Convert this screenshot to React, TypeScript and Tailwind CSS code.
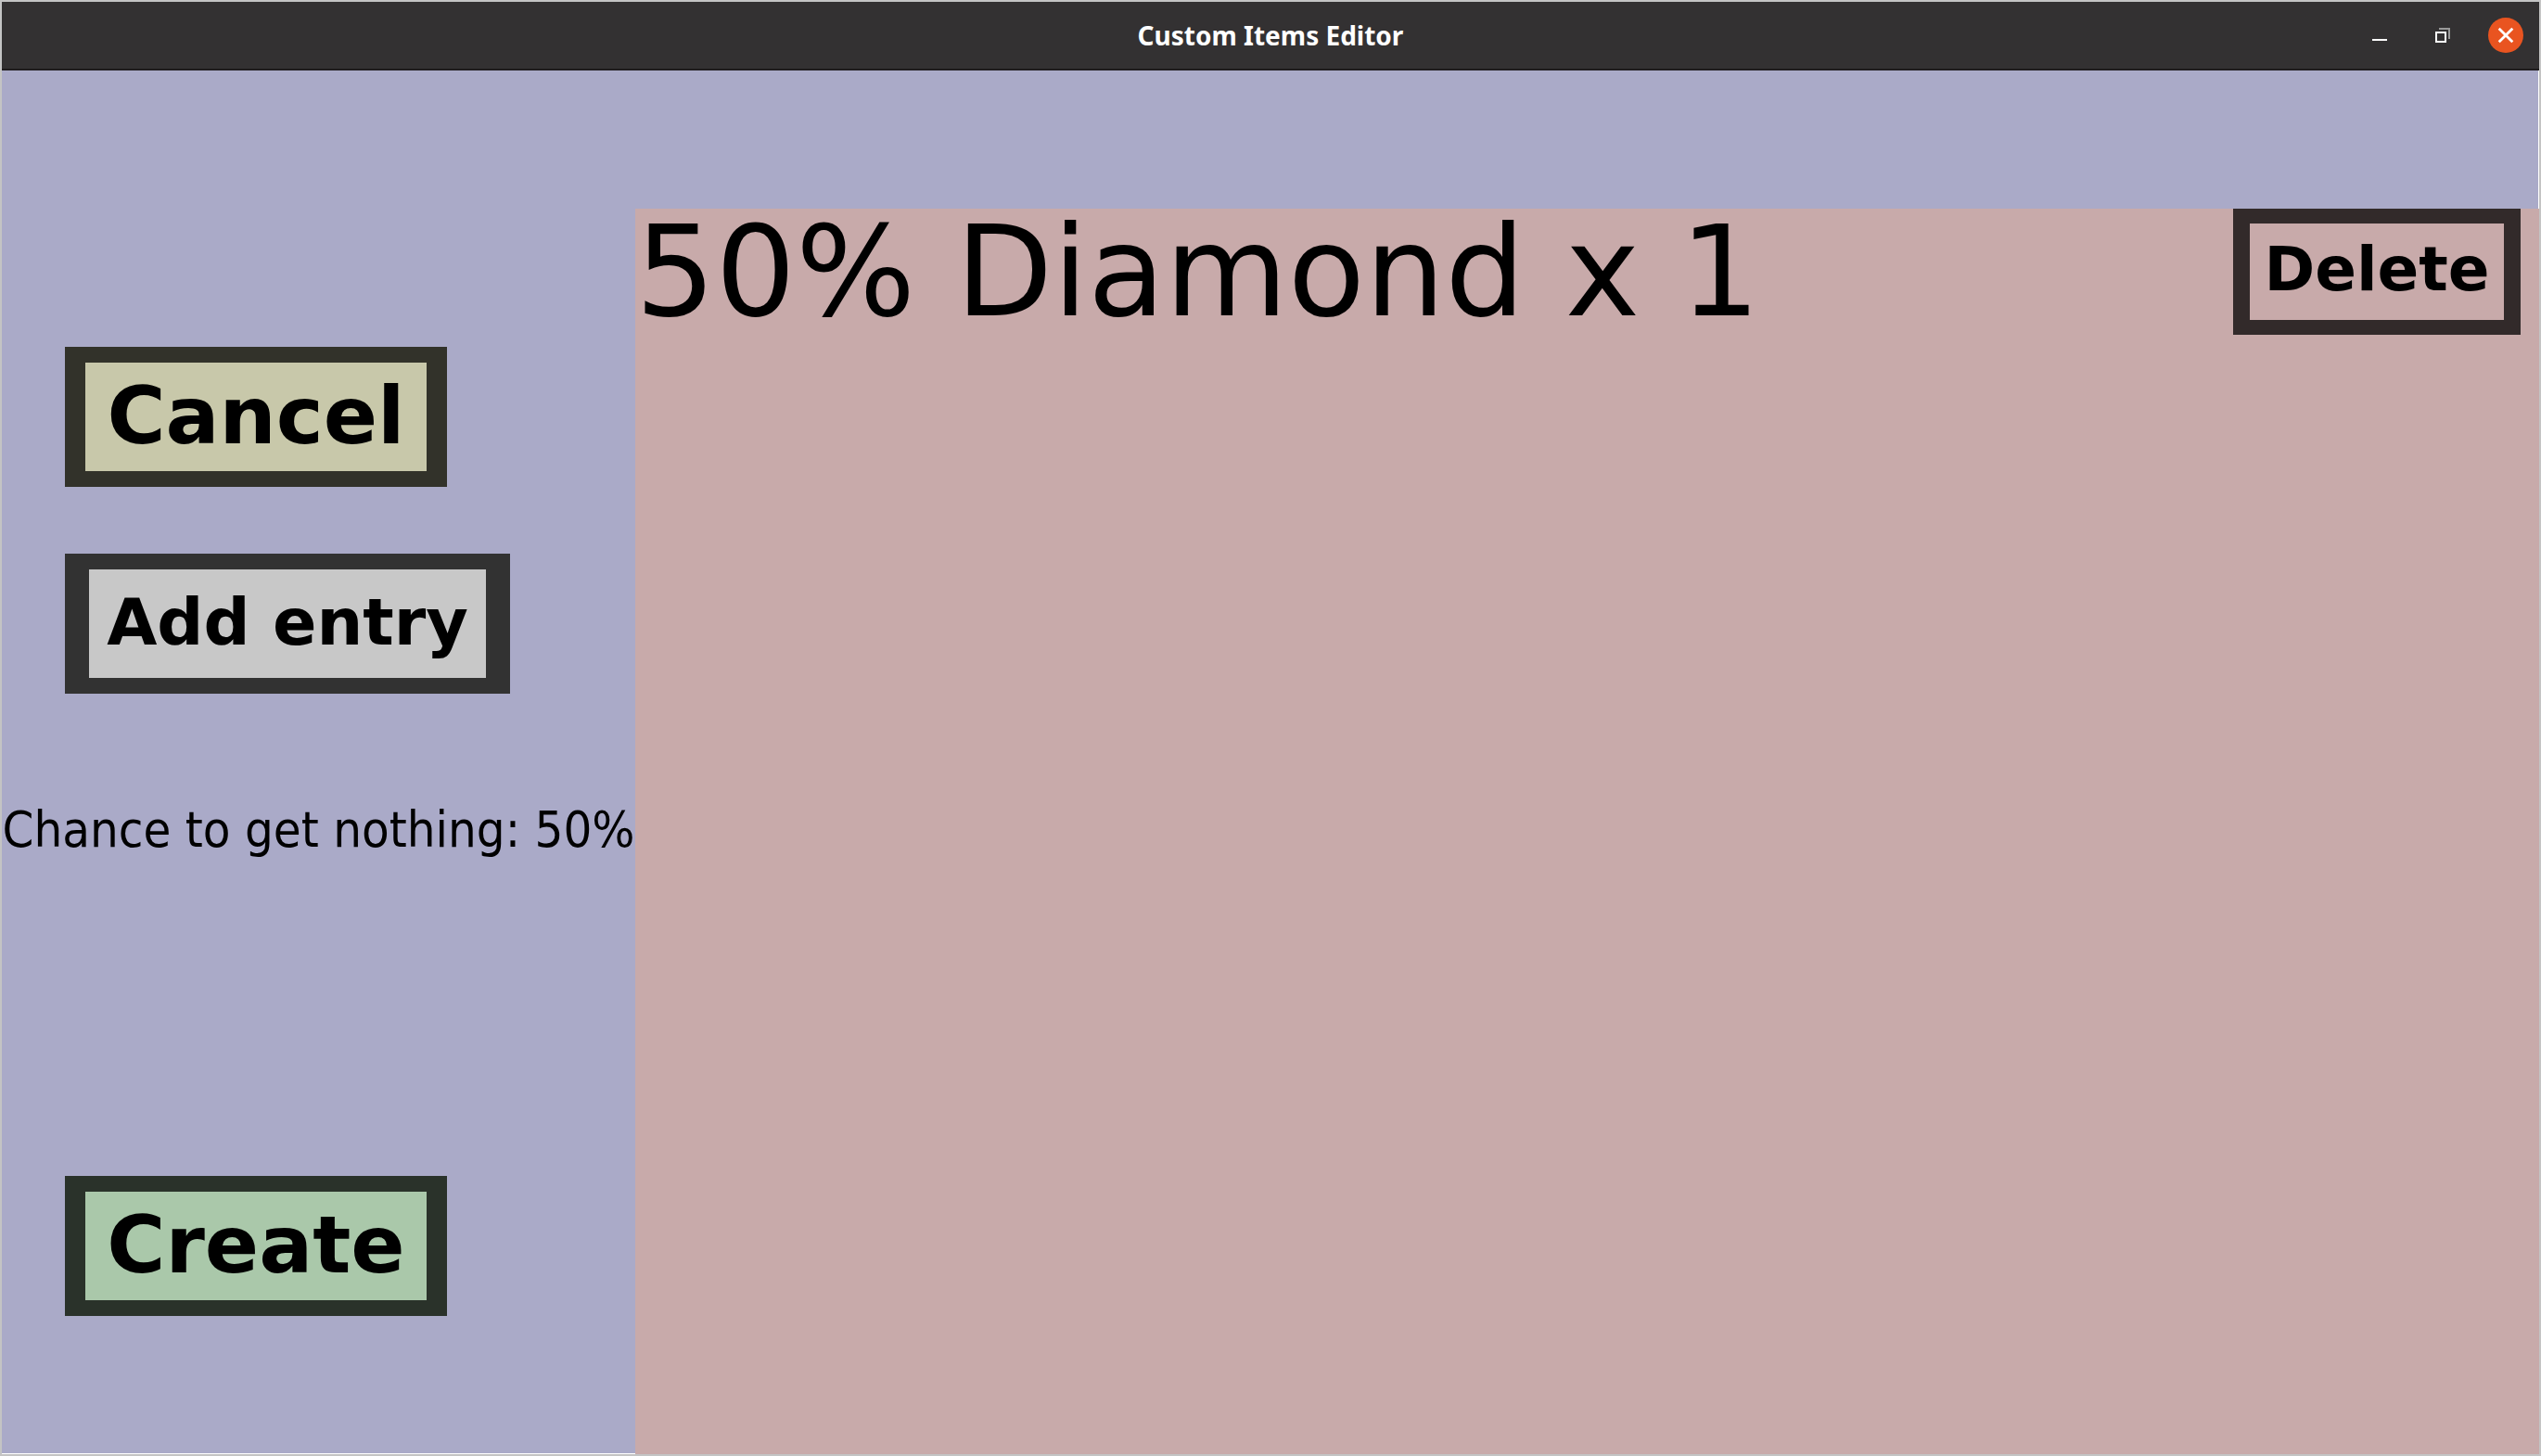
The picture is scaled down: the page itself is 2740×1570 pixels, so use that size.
import type { ReactNode } from "react";

type ActionProps = { className: string; children: ReactNode };

function ActionButton({ className, children }: ActionProps) {
  return (
    <button
      type="button"
      className={`flex items-center justify-center whitespace-nowrap pb-1 font-bold leading-none text-black ${className}`}
    >
      {children}
    </button>
  );
}

function TitleBar() {
  return (
    <header className="grid h-[74px] grid-cols-[1fr_auto_1fr] items-center border-b-2 border-[#1f1c1e] bg-[#333132]">
      <span />
      <h1 className="font-['Noto_Sans',sans-serif] text-[28px] font-bold leading-9 text-white">
        Custom Items Editor
      </h1>
      <div className="flex items-center justify-end gap-7 pr-4">
        <button type="button" aria-label="Minimize" className="size-10">
          <svg viewBox="0 0 40 40" className="size-10" shapeRendering="crispEdges">
            <rect x="12" y="24" width="16" height="2" fill="#fff" />
          </svg>
        </button>
        <button type="button" aria-label="Restore" className="size-10">
          <svg viewBox="0 0 40 40" className="size-10" shapeRendering="crispEdges">
            <path d="M16 12h12v12h-2V14H16z" fill="#999" />
            <path d="M12 16h12v12H12zM14 18v8h8v-8z" fill="#fff" fillRule="evenodd" />
          </svg>
        </button>
        <button type="button" aria-label="Close" className="size-10">
          <svg viewBox="0 0 40 40" className="size-10">
            <circle cx="20" cy="20" r="19" fill="#e95420" />
            <path d="M12.7 12.7l14.6 14.6M27.3 12.7L12.7 27.3" stroke="#fff" strokeWidth="2.8" />
          </svg>
        </button>
      </div>
    </header>
  );
}

export default function App() {
  return (
    <div className="flex min-h-screen flex-col border-2 border-[#c4c4c4] bg-[#aaaac8] font-['DejaVu_Sans',sans-serif] text-black">
      <TitleBar />
      <main className="flex flex-1">
        <aside className="flex w-[calc(25%-1px)] shrink-0 flex-col border-b border-white pb-[148px] pt-[298px]">
          <ActionButton className="ml-[68px] h-[151px] w-[412px] border-x-[22px] border-y-[17px] border-[#32322a] bg-[#c8c8aa] text-[86px]">
            Cancel
          </ActionButton>
          <ActionButton className="ml-[68px] mt-[72px] h-[151px] w-[480px] border-x-[26px] border-y-[17px] border-[#323232] bg-[#c8c8c8] text-[70px]">
            Add entry
          </ActionButton>
          <p className="mt-[72px] flex h-[149px] items-center justify-center whitespace-nowrap font-['DejaVu_Sans_Condensed','DejaVu_Sans',sans-serif] text-[54px] leading-none">
            Chance to get nothing: 50%
          </p>
          <ActionButton className="ml-[68px] mt-auto h-[151px] w-[412px] border-x-[22px] border-y-[17px] border-[#2a322a] bg-[#aac8aa] text-[86px]">
            Create
          </ActionButton>
        </aside>
        <div className="flex flex-1 flex-col">
          <div className="h-[149px] border-r border-white" />
          <ul className="flex-1 bg-[#c8aaaa]">
            <li className="flex h-[136px] items-center justify-between pr-5">
              <span className="whitespace-nowrap text-[136px] leading-none">50% Diamond x 1</span>
              <ActionButton className="h-[136px] w-[310px] border-x-[18px] border-y-[16px] border-[#322a2a] bg-[#c8aaaa] text-[66px]">
                Delete
              </ActionButton>
            </li>
          </ul>
        </div>
      </main>
    </div>
  );
}
